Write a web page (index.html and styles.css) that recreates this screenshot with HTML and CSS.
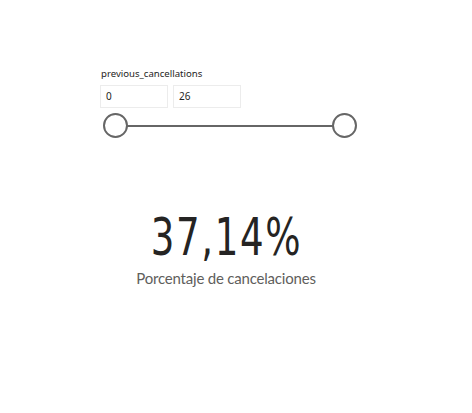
FILE: index.html
```html
<!DOCTYPE html>
<html>
<head>
<meta charset="utf-8">
<link rel="stylesheet" href="styles.css">
</head>
<body>
<div class="page">
  <section class="slicer">
    <div class="slicer-title">previous_cancellations</div>
    <div class="inputs">
      <div class="box">0</div>
      <div class="box">26</div>
    </div>
    <div class="slider">
      <span class="track"></span>
      <span class="thumb thumb-left"></span>
      <span class="thumb thumb-right"></span>
    </div>
  </section>
  <section class="kpi">
    <div class="value-row"><span class="value">37,14%</span></div>
    <div class="caption">Porcentaje de cancelaciones</div>
  </section>
</div>
</body>
</html>
```
FILE: styles.css
```css
html, body {
  margin: 0;
  padding: 0;
  background: #ffffff;
}
.page {
  width: 472px;
  height: 413px;
  overflow: hidden;
}
.slicer {
  padding: 68px 0 0 100px;
}
.slicer-title {
  font-family: "Noto Sans", sans-serif;
  font-size: 9.6px;
  color: #252423;
  line-height: 12px;
  margin-left: 1px;
}
.inputs {
  display: flex;
  gap: 5px;
  margin-top: 5px;
}
.box {
  height: 21px;
  border: 1px solid #ececec;
  font-family: "Noto Sans", sans-serif;
  font-size: 10px;
  line-height: 21px;
  padding-left: 5px;
  box-sizing: content-box;
  color: #252423;
  width: 61px;
}
.slider {
  position: relative;
  width: 254px;
  height: 26px;
  margin-top: 5px;
  margin-left: 3px;
}
.track {
  position: absolute;
  left: 12px;
  right: 12px;
  top: 12px;
  height: 2px;
  background: #666666;
}
.thumb {
  position: absolute;
  top: 0;
  width: 21px;
  height: 21px;
  border: 2px solid #666666;
  border-radius: 50%;
  background: #ffffff;
}
.thumb-left { left: 0; }
.thumb-right { right: 0; }
.kpi {
  width: 452px;
  text-align: center;
  margin-top: 77px;
}
.value-row {
  height: 44px;
  line-height: 44px;
}
.value {
  display: inline-block;
  font-family: "DejaVu Sans Condensed", "DejaVu Sans", sans-serif;
  font-stretch: condensed;
  font-size: 51px;
  line-height: 44px;
  letter-spacing: 2px;
  color: #252423;
  transform: scaleX(0.81);
  transform-origin: center;
}
.caption {
  font-family: "Lato", sans-serif;
  font-size: 15px;
  letter-spacing: -0.2px;
  line-height: 20px;
  color: #605e5c;
  margin-top: 8px;
}
```
